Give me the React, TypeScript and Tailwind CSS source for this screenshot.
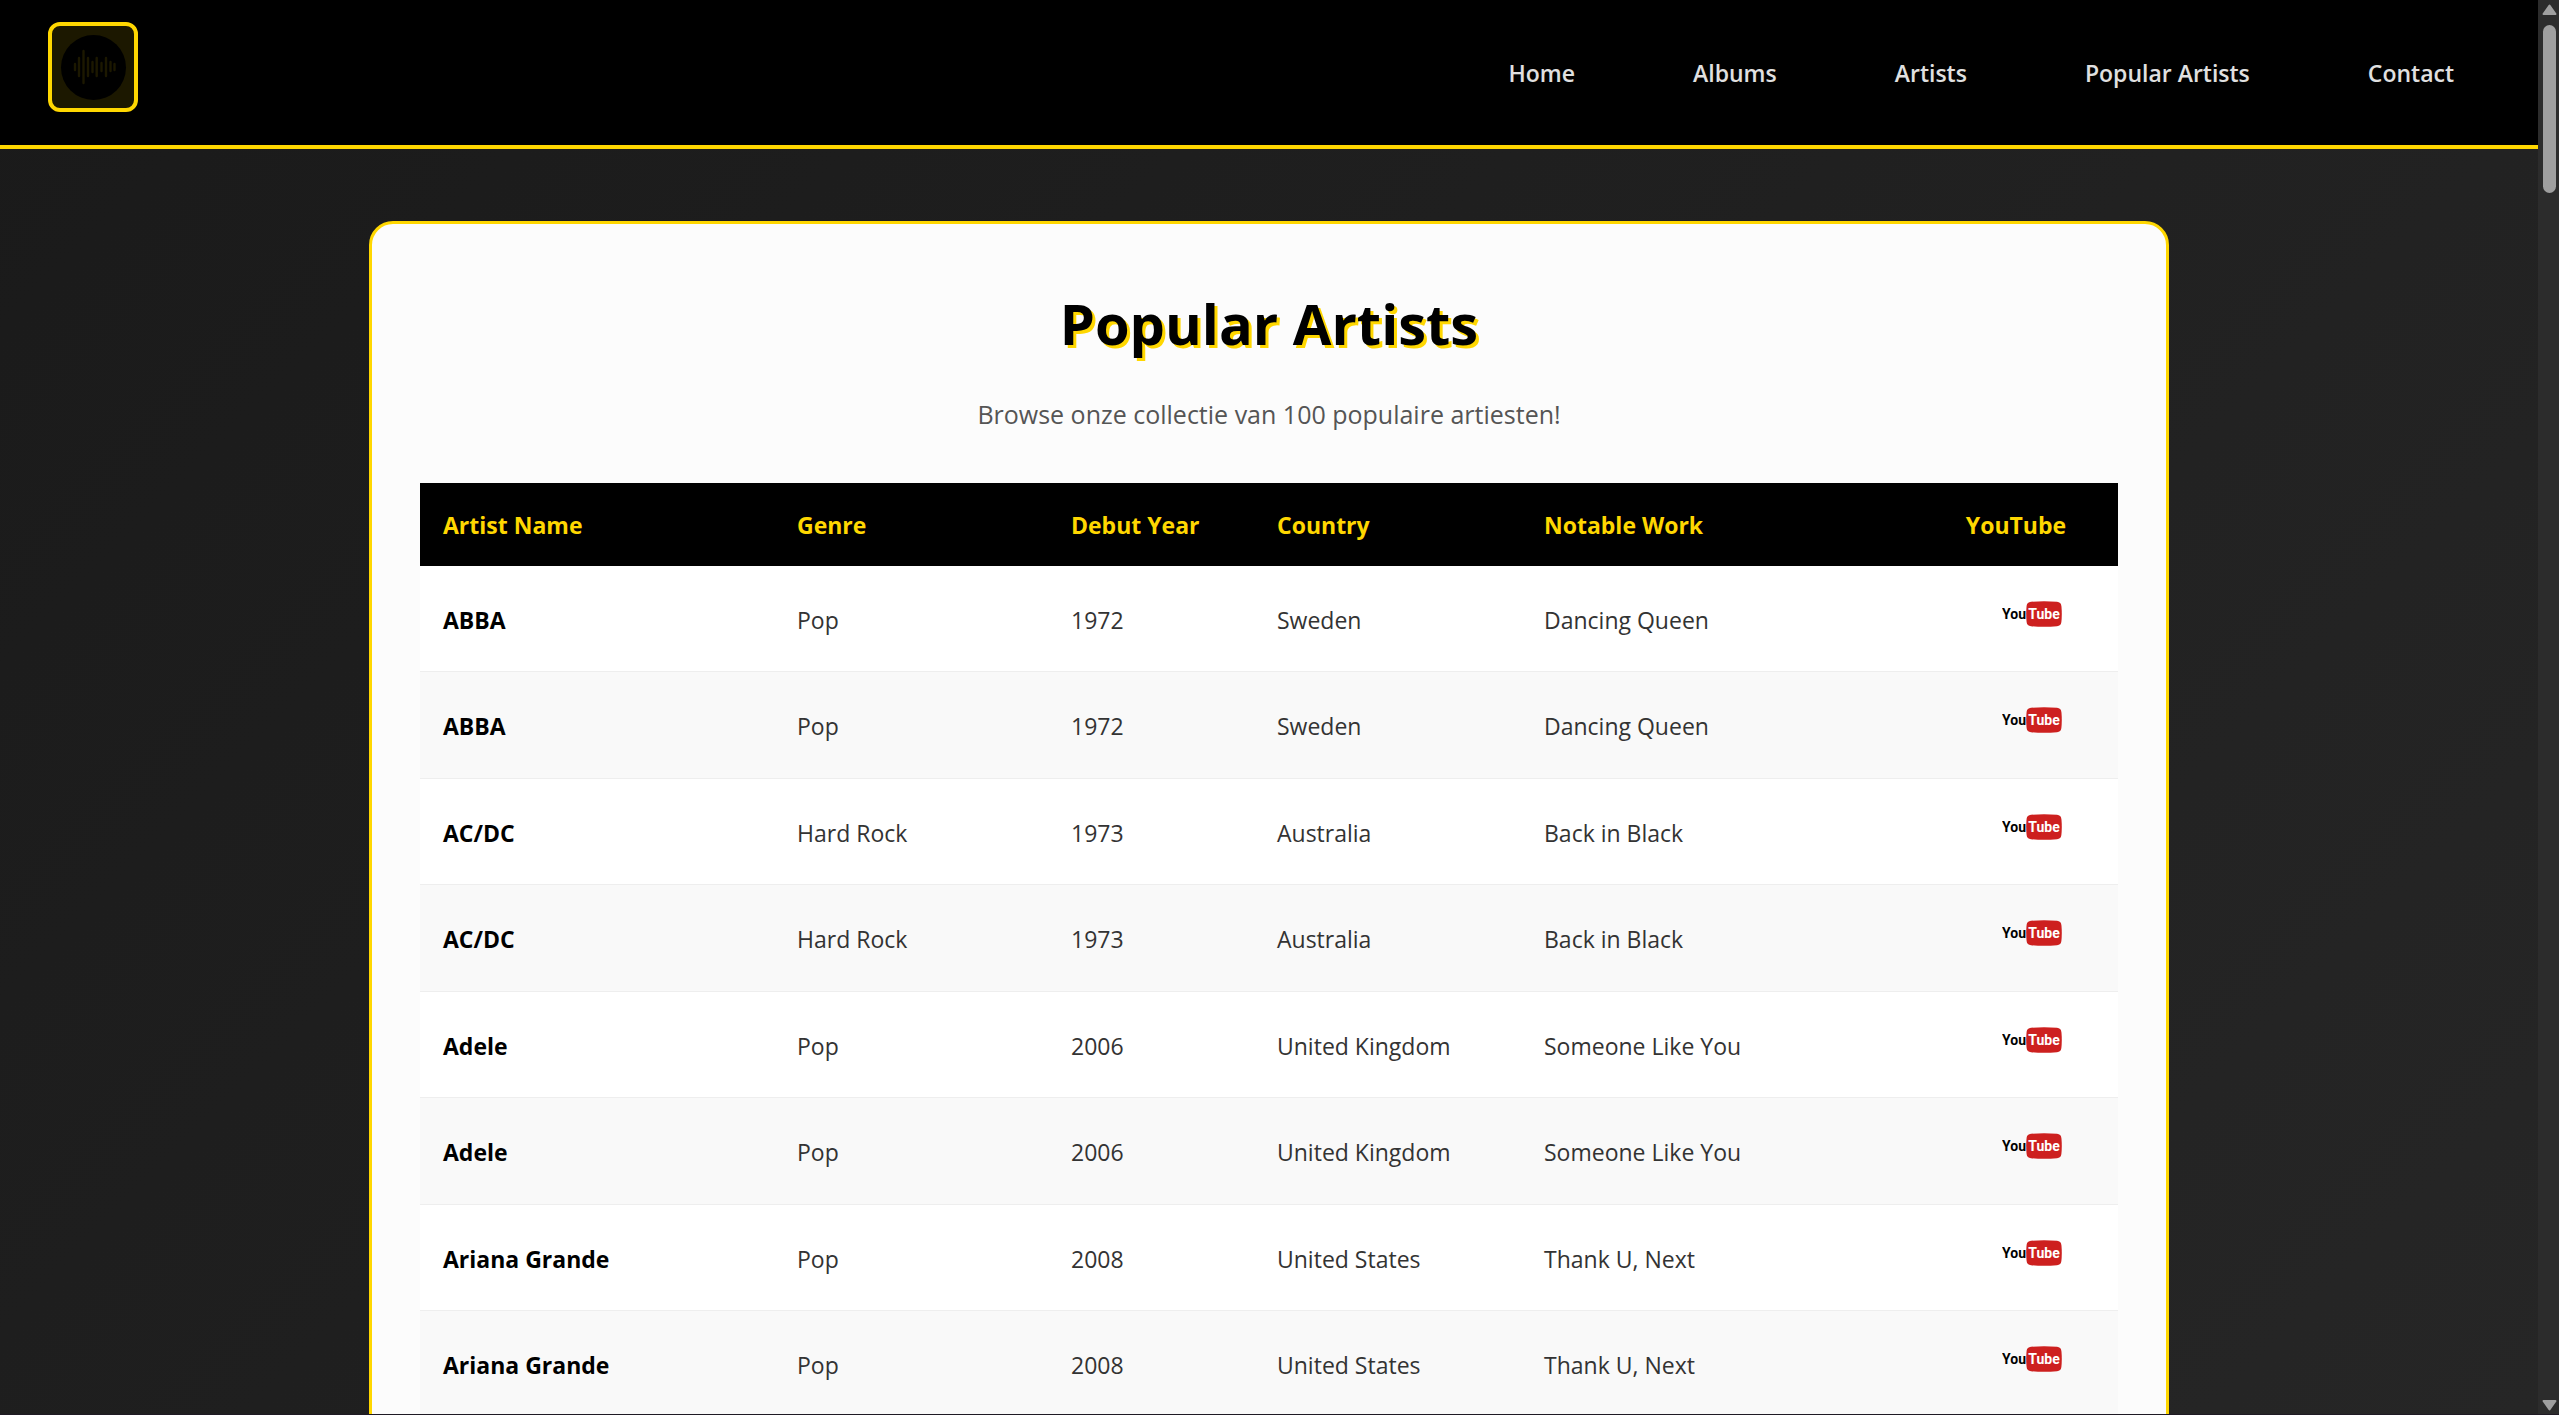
import React from 'react';

interface Artist {
  name: string;
  genre: string;
  debut: number;
  country: string;
  work: string;
}

const links = ['Home', 'Albums', 'Artists', 'Popular Artists', 'Contact'];

const artists: Artist[] = [
  { name: 'ABBA', genre: 'Pop', debut: 1972, country: 'Sweden', work: 'Dancing Queen' },
  { name: 'ABBA', genre: 'Pop', debut: 1972, country: 'Sweden', work: 'Dancing Queen' },
  { name: 'AC/DC', genre: 'Hard Rock', debut: 1973, country: 'Australia', work: 'Back in Black' },
  { name: 'AC/DC', genre: 'Hard Rock', debut: 1973, country: 'Australia', work: 'Back in Black' },
  { name: 'Adele', genre: 'Pop', debut: 2006, country: 'United Kingdom', work: 'Someone Like You' },
  { name: 'Adele', genre: 'Pop', debut: 2006, country: 'United Kingdom', work: 'Someone Like You' },
  { name: 'Ariana Grande', genre: 'Pop', debut: 2008, country: 'United States', work: 'Thank U, Next' },
  { name: 'Ariana Grande', genre: 'Pop', debut: 2008, country: 'United States', work: 'Thank U, Next' },
];

// x, top and bottom of every bar in the sound wave
const bars = [
  [27, 42, 48],
  [31, 36, 54],
  [35.5, 29, 61],
  [40, 36, 54],
  [44.5, 40, 50],
  [48.7, 36, 54],
  [53.5, 41, 49],
  [58, 36, 54],
  [62.5, 40, 49],
  [66.5, 42, 48],
];

const Logo: React.FC = () => (
  <svg viewBox="4 4 82 82" className="w-full h-full" aria-hidden="true">
    <circle cx="45.5" cy="45.5" r="32.5" fill="#000" />
    {bars.map(([x, top, bottom]) => (
      <line key={x} x1={x} x2={x} y1={top} y2={bottom} stroke="#1c1800" strokeWidth="2.4" strokeLinecap="round" />
    ))}
  </svg>
);

const YouTubeLogo: React.FC = () => (
  <svg width="60" height="26" viewBox="0 0 60 26" aria-hidden="true" className="font-[Roboto,sans-serif] font-bold text-[14px]">
    <text x="0" y="18" fill="#000">You</text>
    <path d="M29 .8 Q42 -.4 55 .8 Q59 1.2 59.4 5 Q60.2 13 59.4 21 Q59 24.8 55 25.2 Q42 26.4 29 25.2 Q25 24.8 24.6 21 Q23.8 13 24.6 5 Q25 1.2 29 .8Z" fill="#cd201f" />
    <text x="42" y="18" fill="#fff" textAnchor="middle">Tube</text>
  </svg>
);

const Header: React.FC = () => (
  <header className="flex items-center justify-between bg-black border-b-4 border-[#ffd700] px-12 py-[22px]">
    <a href="#home" aria-label="Home" className="block pb-[11px]">
      <div className="w-[90px] h-[90px] border-4 border-[#ffd700] rounded-xl bg-[#1c1800]">
        <Logo />
      </div>
    </a>
    <nav className="flex gap-[46px]">
      {links.map((link) => (
        <a key={link} href="#" className="px-9 text-[23px] leading-8 font-semibold text-[#e0e0e0] hover:text-[#ffd700]">
          {link}
        </a>
      ))}
    </nav>
  </header>
);

const ArtistTable: React.FC = () => (
  <table className="w-full table-fixed border-separate border-spacing-0 bg-white text-[23px] leading-8 text-left">
    <thead>
      <tr className="h-[83px] bg-black text-[#ffd700]">
        <th className="w-[354px] px-[23px] font-bold">Artist Name</th>
        <th className="w-[274px] px-[23px] font-bold">Genre</th>
        <th className="w-[206px] px-[23px] font-bold">Debut Year</th>
        <th className="w-[267px] px-[23px] font-bold">Country</th>
        <th className="px-[23px] font-bold">Notable Work</th>
        <th className="w-[204px] px-[23px] font-bold text-center">YouTube</th>
      </tr>
    </thead>
    <tbody>
      {artists.map((artist, index) => (
        <tr key={index} className="h-[106px] even:h-[107px] even:bg-[#f9f9f9] text-[#333333] *:border-b *:border-[#eeeeee] *:pt-0.5">
          <td className="px-[23px] font-bold text-black">{artist.name}</td>
          <td className="px-[23px]">{artist.genre}</td>
          <td className="px-[23px]">{artist.debut}</td>
          <td className="px-[23px]">{artist.country}</td>
          <td className="px-[23px]">{artist.work}</td>
          <td>
            <a href="#" aria-label={artist.name + ' on YouTube'} className="flex justify-center pl-8 pb-3">
              <YouTubeLogo />
            </a>
          </td>
        </tr>
      ))}
    </tbody>
  </table>
);

const ScrollBar: React.FC = () => (
  <div className="w-[21px] shrink-0 flex flex-col items-center justify-between bg-[#2c2c2c] pl-0.5 pt-1 pb-[3px]" aria-hidden="true">
    <div className="flex flex-col items-center gap-2.5">
      <svg width="15" height="11" viewBox="0 0 15 11">
        <path d="M7.5 1.5 L13.5 10 H1.5Z" fill="#9f9f9f" stroke="#9f9f9f" strokeWidth="2" strokeLinejoin="round" />
      </svg>
      <div className="w-[13px] h-[168px] rounded-full bg-[#9f9f9f]"></div>
    </div>
    <svg width="15" height="11" viewBox="0 0 15 11">
      <path d="M7.5 9.5 L13.5 1 H1.5Z" fill="#9f9f9f" stroke="#9f9f9f" strokeWidth="2" strokeLinejoin="round" />
    </svg>
  </div>
);

const App: React.FC = () => {
  return (
    <div className="h-screen flex overflow-hidden border-b border-[#1f1a24] font-['Open_Sans','Noto_Sans',sans-serif]">
      <div className="flex-1 min-w-0 flex flex-col overflow-hidden bg-linear-135 from-[#1a1a1a] to-[#262626]">
        <Header />

        {/* Popular artists */}
        <main className="px-12 pt-18">
          <section className="max-w-[1800px] mx-auto p-12 bg-[#fcfcfc] border-3 border-[#ffd700] rounded-3xl">
            <h1 className="mb-[18px] text-[56px] leading-[102px] font-bold text-center text-black text-shadow-[3px_3px_0_#ffd700]">
              Popular Artists
            </h1>
            <p className="mb-[46px] text-[25px] leading-[45px] text-center text-[#555555]">
              Browse onze collectie van 100 populaire artiesten!
            </p>
            <ArtistTable />
          </section>
        </main>
      </div>
      <ScrollBar />
    </div>
  );
};

export default App;
